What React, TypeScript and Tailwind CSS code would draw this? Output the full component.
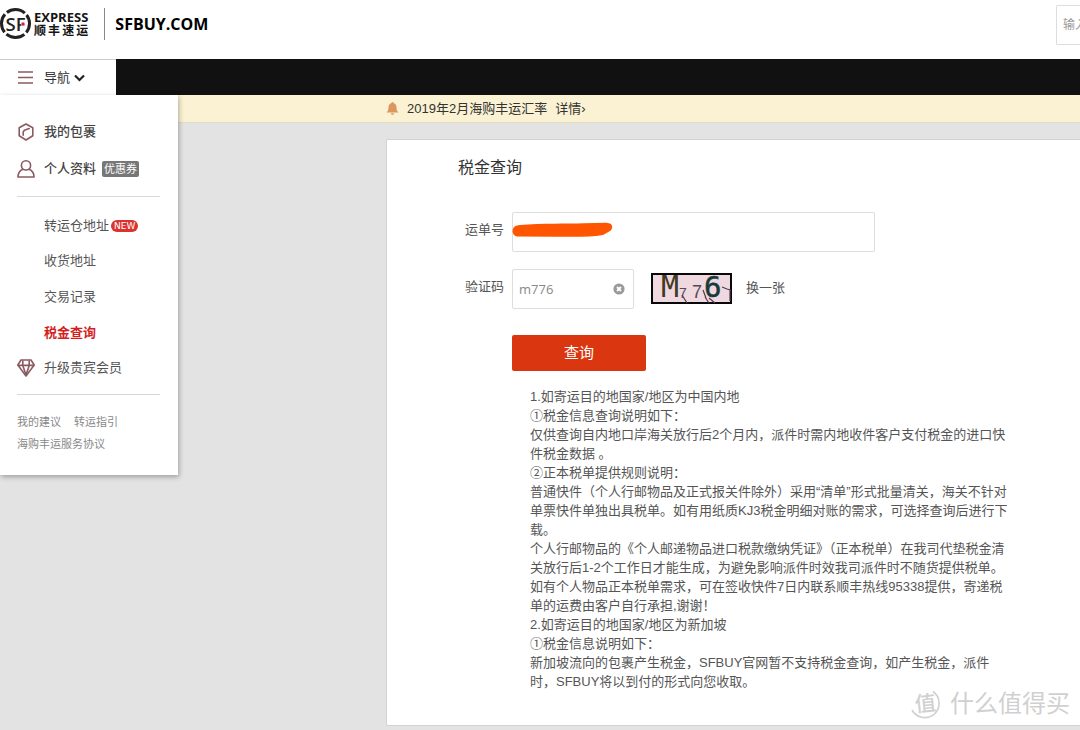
import React from "react";

const links = ["收货地址", "交易记录"];

const notes = [
  "1.如寄运目的地国家/地区为中国内地",
  "①税金信息查询说明如下：",
  "仅供查询自内地口岸海关放行后2个月内，派件时需内地收件客户支付税金的进口快件税金数据 。",
  "②正本税单提供规则说明：",
  "普通快件（个人行邮物品及正式报关件除外）采用“清单”形式批量清关，海关不针对单票快件单独出具税单。如有用纸质KJ3税金明细对账的需求，可选择查询后进行下载。",
  "个人行邮物品的《个人邮递物品进口税款缴纳凭证》（正本税单）在我司代垫税金清关放行后1-2个工作日才能生成，为避免影响派件时效我司派件时不随货提供税单。",
  "如有个人物品正本税单需求，可在签收快件7日内联系顺丰热线95338提供，寄递税单的运费由客户自行承担,谢谢！",
  "2.如寄运目的地国家/地区为新加坡",
  "①税金信息说明如下：",
  "新加坡流向的包裹产生税金，SFBUY官网暂不支持税金查询，如产生税金，派件时，SFBUY将以到付的形式向您收取。",
];

function Logo() {
  return (
    <a href="#" className="flex items-center text-[#151515]">
      <svg width="32" height="32" viewBox="0 0 32 32" aria-hidden="true">
        <circle cx="15.5" cy="15.5" r="14" fill="none" stroke="#222" strokeWidth="3" strokeDasharray="19.4 2.59" strokeDashoffset="9.7" />
        <text x="5.5" y="22.5" fontSize="18.5" fontWeight="600" fill="#222" fontFamily="'Open Sans', sans-serif">SF</text>
        <circle cx="23" cy="16" r="2" fill="#e0202c" stroke="#fff" strokeWidth=".6" />
      </svg>
      <span className="ml-0.5 flex flex-col font-['Open_Sans','Noto_Sans_CJK_SC',sans-serif] font-bold">
        <span className="text-[13px] leading-[13px]">EXPRESS</span>
        <span className="flex justify-between text-[12px] leading-[13px]">
          <span>顺</span><span>丰</span><span>速</span><span>运</span>
        </span>
      </span>
    </a>
  );
}

function Header() {
  return (
    <header className="flex h-[59px] items-start justify-between bg-white">
      <div className="flex items-center pt-2">
        <Logo />
        <span className="ml-4 h-8 w-px bg-[#888]" />
        <a href="#" className="ml-[10px] font-['Open_Sans',sans-serif] text-[16px] font-bold leading-6 text-black">SFBUY.COM</a>
      </div>
      <input
        aria-label="搜索"
        placeholder="输入"
        className="mt-[5px] h-10 w-6 rounded-l-xs border border-r-0 border-[#ddd] pl-[6px] text-[12px] outline-none placeholder:text-[#999]"
      />
    </header>
  );
}

function PackageIcon() {
  return (
    <svg width="18" height="18" viewBox="0 0 18 18" fill="none" stroke="#8b5a60" strokeWidth="1.6" strokeLinejoin="round" strokeLinecap="round" aria-hidden="true">
      <path d="M9 1 15.8 4.8V12.8L9 17 2.2 12.8V4.8Z" />
      <path d="M12.2 5.6 7.4 7.2 6.2 9V12.2" />
    </svg>
  );
}

function PersonIcon() {
  return (
    <svg width="18" height="18" viewBox="0 0 18 18" fill="none" stroke="#8b5a60" strokeWidth="1.6" strokeLinejoin="round" aria-hidden="true">
      <circle cx="9" cy="5.4" r="4.6" />
      <path d="M6 9.2C2.8 10.5 1 13 .9 17H17.1C17 13 15.2 10.5 12 9.2" />
    </svg>
  );
}

function DiamondIcon() {
  return (
    <svg width="18" height="18" viewBox="0 0 18 18" fill="none" stroke="#8b5a60" strokeWidth="1.6" strokeLinejoin="round" aria-hidden="true">
      <path d="M4 1H14L17.2 6 9 17 .8 6Z" />
      <path d="M.8 6.4H17.2M5.8 1.6V6.4L9 16 12.2 6.4V1.6" />
    </svg>
  );
}

function Menu() {
  return (
    <aside className="absolute left-0 top-full z-10 h-[380px] w-[178px] bg-white pl-[17px] pr-[18px] pt-[19px] text-[13px] text-[#555] shadow-[1px_2px_5px_rgba(0,0,0,0.3)]">
      <ul>
        <li className="flex h-9 items-center">
          <a href="#" className="flex items-center gap-[9px] font-medium text-[#444]"><PackageIcon />我的包裹</a>
        </li>
        <li className="flex h-[38px] items-center gap-[6px]">
          <a href="#" className="flex items-center gap-[9px] font-medium text-[#444]"><PersonIcon />个人资料</a>
          <span className="rounded-xs bg-[#777] px-[2px] text-[11px] leading-4 text-white">优惠券</span>
        </li>
      </ul>
      <hr className="mb-[11px] mt-2 border-[#d8d8d8]" />
      <ul>
        <li className="flex h-[35px] items-center gap-[2px] pl-[27px]">
          <a href="#">转运仓地址</a>
          <span className="rounded-full bg-[#d9342f] px-[3px] font-['DejaVu_Sans',sans-serif] text-[9px] leading-3 text-white">NEW</span>
        </li>
        {links.map((l) => (
          <li key={l} className="flex h-9 items-center pl-[27px]"><a href="#">{l}</a></li>
        ))}
        <li className="flex h-[35px] items-center pl-[27px]"><a href="#" className="font-bold text-[#d51f1f]">税金查询</a></li>
        <li className="flex h-9 items-center"><a href="#" className="flex items-center gap-[9px]"><DiamondIcon />升级贵宾会员</a></li>
      </ul>
      <hr className="mb-4 mt-2 border-[#d8d8d8]" />
      <div className="flex flex-wrap gap-x-[13px] text-[11px] leading-[22px] text-[#888]">
        <a href="#">我的建议</a>
        <a href="#">转运指引</a>
        <a href="#">海购丰运服务协议</a>
      </div>
    </aside>
  );
}

function NavBar() {
  return (
    <nav className="relative flex h-9 bg-[#111]">
      <button type="button" className="flex w-[116px] items-center border-t border-[#ccc] bg-white pl-[18px] text-[13px] text-[#333]">
        <svg width="15" height="13" viewBox="0 0 15 13" stroke="#8b5a60" strokeWidth="1.4" aria-hidden="true">
          <path d="M0 1H15M0 6.5H15M0 12H15" />
        </svg>
        <span className="ml-[11px]">导航</span>
        <svg className="ml-1" width="11" height="8" viewBox="0 0 11 8" fill="none" stroke="#222" strokeWidth="2.2" aria-hidden="true">
          <path d="M1 1.5 5.5 6 10 1.5" />
        </svg>
      </button>
      <Menu />
    </nav>
  );
}

function Notice() {
  return (
    <div className="flex h-7 items-center border-b border-[#e3dcc0] bg-[#faf2d2] pl-[386px] text-[13px] text-[#333]">
      <svg width="13" height="13" viewBox="0 0 13 13" fill="#dc9660" aria-hidden="true">
        <path d="M6.5 0Q7.5 0 7.5 1.1C9.7 1.7 10.5 3.4 10.5 5.5 10.5 8 11 9 12.5 10.4H.5C2 9 2.5 8 2.5 5.5 2.5 3.4 3.3 1.7 5.5 1.1 5.5 .4 5.8 0 6.5 0ZM4.8 11.2H8.2Q8 12.8 6.5 12.8 5 12.8 4.8 11.2Z" />
      </svg>
      <span className="ml-2">2019年2月海购丰运汇率</span>
      <a href="#" className="ml-2">详情›</a>
    </div>
  );
}

function Captcha() {
  return (
    <svg width="81" height="31" viewBox="0 0 81 31" role="img" aria-label="验证码图片">
      <rect x="1" y="1" width="79" height="29" fill="#efd8df" stroke="#080808" strokeWidth="2" />
      <g fontFamily="'DejaVu Sans Mono', monospace">
        <text x="10" y="24" fontSize="30" fill="#3f3a22">M</text>
        <text x="28" y="25" fontSize="14" fill="#534b53" fontFamily="'Liberation Sans', sans-serif">7</text>
        <text x="41" y="25" fontSize="18" fill="#534b53" fontFamily="'Liberation Sans', sans-serif">7</text>
        <text x="53" y="24" fontSize="29" fill="#173a38" stroke="#173a38" strokeWidth=".5">6</text>
      </g>
      <path d="M31 22 36 30M52 17 55 25M54 24 58 30M58 25 64 30M71 14 76 16 80 17M79 17V28" fill="none" stroke="#52394e" strokeWidth="1.2" />
    </svg>
  );
}

function QueryForm() {
  return (
    <form className="text-[13px] text-[#555]" onSubmit={(e) => e.preventDefault()}>
      <div className="mt-8 flex">
        <label htmlFor="waybill" className="w-[125px] pr-2 text-right leading-9">运单号</label>
        <div className="relative">
          <input id="waybill" className="block h-10 w-[363px] rounded-xs border border-[#ddd] px-[6px] outline-none" />
          <svg className="pointer-events-none absolute left-0 top-[10px]" width="102" height="16" viewBox="0 0 102 16" aria-hidden="true">
            <path d="M8 3C30 1.2 55 2 72 1.3L94 .8C102 1 101 7 98 9L91 13C76 15.5 58 14.5 42 14.7L5 14.4C-1 13.5-1 4.5 5 3.5Z" fill="#ff5400" />
          </svg>
        </div>
      </div>
      <div className="mt-[17px] flex">
        <label htmlFor="code" className="w-[125px] pr-2 text-right leading-9">验证码</label>
        <div className="relative">
          <input id="code" defaultValue="m776" className="block h-10 w-[122px] rounded-xs border border-[#ddd] px-[6px] font-['Open_Sans',sans-serif] text-[13px] text-[#888] outline-none" />
          <button type="button" aria-label="清除" className="absolute right-[9px] top-[14px]">
            <svg width="12" height="12" viewBox="0 0 12 12" aria-hidden="true">
              <circle cx="6" cy="6" r="5.6" fill="#999" />
              <path d="M4 4 8 8M8 4 4 8" stroke="#fff" strokeWidth="1.8" />
            </svg>
          </button>
        </div>
        <span className="ml-[17px] mt-1"><Captcha /></span>
        <a href="#" className="ml-[14px] leading-[38px]">换一张</a>
      </div>
      <button type="submit" className="ml-[125px] mt-[26px] h-9 w-[134px] rounded-xs bg-[#da3610] text-[15px] text-white">查询</button>
    </form>
  );
}

function Watermark() {
  return (
    <div className="pointer-events-none absolute bottom-[5px] right-[10px] flex items-center gap-[9px] text-[24px] leading-8 text-[#d0d0d0]" aria-hidden="true">
      <span className="relative flex size-8 items-center justify-center">
        <svg className="absolute inset-0" width="32" height="32" viewBox="0 0 32 32" fill="none" stroke="#d0d0d0" strokeWidth="1.6">
          <path d="M24 3.5C32 9 32 21 24.5 26.8 17 32 7 29.5 3 22" />
        </svg>
        <span className="-rotate-6 text-[21px] font-medium">值</span>
      </span>
      <span>什么值得买</span>
    </div>
  );
}

export default function App() {
  return (
    <div className="min-h-screen overflow-x-hidden bg-[#e3e3e3] font-['Liberation_Sans','Noto_Sans_CJK_SC',sans-serif]">
      <Header />
      <NavBar />
      <Notice />
      <main className="relative mb-1 ml-[386px] mt-4 rounded-l-xs border border-r-0 border-[#d2d2d2] bg-white pb-[34px] pt-4">
        <h1 className="pl-[71px] text-[16px] leading-6 text-[#333]">税金查询</h1>
        <QueryForm />
        <section className="ml-[143px] mt-4 w-[482px] text-[13px] leading-[19px] text-[#555]">
          {notes.map((n) => <p key={n}>{n}</p>)}
        </section>
        <Watermark />
      </main>
    </div>
  );
}
